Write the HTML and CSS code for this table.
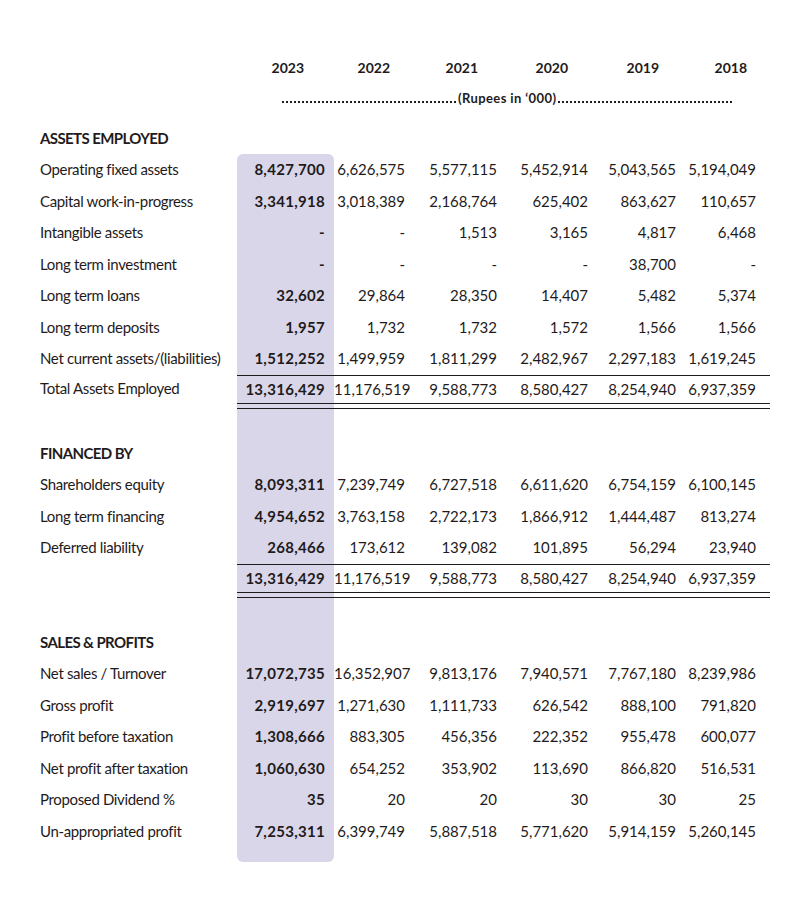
FILE: index.html
```
<!DOCTYPE html>
<html lang="en">
<head>
<meta charset="utf-8">
<title>Six Years at a Glance</title>
<link rel="stylesheet" href="styles.css">
</head>
<body>
<div class="sheet">
  <div class="years">
    <span></span><span>2023</span><span>2022</span><span>2021</span><span>2020</span><span>2019</span><span>2018</span>
  </div>
  <div class="unit"><span class="dots dots-left"></span><span class="unit-text">(Rupees in ‘000)</span><span class="dots"></span></div>

  <div class="table">
    <div class="row"><div class="label title">ASSETS EMPLOYED</div></div>
    <div class="row"><div class="label">Operating fixed assets</div><div class="c hl top">8,427,700</div><div class="c">6,626,575</div><div class="c">5,577,115</div><div class="c">5,452,914</div><div class="c">5,043,565</div><div class="c">5,194,049</div></div>
    <div class="row"><div class="label">Capital work-in-progress</div><div class="c hl">3,341,918</div><div class="c">3,018,389</div><div class="c">2,168,764</div><div class="c">625,402</div><div class="c">863,627</div><div class="c">110,657</div></div>
    <div class="row"><div class="label">Intangible assets</div><div class="c hl">-</div><div class="c">-</div><div class="c">1,513</div><div class="c">3,165</div><div class="c">4,817</div><div class="c">6,468</div></div>
    <div class="row"><div class="label">Long term investment</div><div class="c hl">-</div><div class="c">-</div><div class="c">-</div><div class="c">-</div><div class="c">38,700</div><div class="c">-</div></div>
    <div class="row"><div class="label">Long term loans</div><div class="c hl">32,602</div><div class="c">29,864</div><div class="c">28,350</div><div class="c">14,407</div><div class="c">5,482</div><div class="c">5,374</div></div>
    <div class="row"><div class="label">Long term deposits</div><div class="c hl">1,957</div><div class="c">1,732</div><div class="c">1,732</div><div class="c">1,572</div><div class="c">1,566</div><div class="c">1,566</div></div>
    <div class="row"><div class="label">Net current assets/(liabilities)</div><div class="c hl">1,512,252</div><div class="c">1,499,959</div><div class="c">1,811,299</div><div class="c">2,482,967</div><div class="c">2,297,183</div><div class="c">1,619,245</div></div>
    <div class="row total"><div class="label">Total Assets Employed</div><div class="c hl">13,316,429</div><div class="c">11,176,519</div><div class="c">9,588,773</div><div class="c">8,580,427</div><div class="c">8,254,940</div><div class="c">6,937,359</div></div>
    <div class="row dbl"><div class="label"></div><div class="c hl"></div><div class="c"></div><div class="c"></div><div class="c"></div><div class="c"></div><div class="c"></div></div>
    <div class="row gap"><div class="label"></div><div class="c hl"></div></div>

    <div class="row"><div class="label title">FINANCED BY</div><div class="c hl"></div></div>
    <div class="row"><div class="label">Shareholders equity</div><div class="c hl">8,093,311</div><div class="c">7,239,749</div><div class="c">6,727,518</div><div class="c">6,611,620</div><div class="c">6,754,159</div><div class="c">6,100,145</div></div>
    <div class="row"><div class="label">Long term financing</div><div class="c hl">4,954,652</div><div class="c">3,763,158</div><div class="c">2,722,173</div><div class="c">1,866,912</div><div class="c">1,444,487</div><div class="c">813,274</div></div>
    <div class="row"><div class="label">Deferred liability</div><div class="c hl">268,466</div><div class="c">173,612</div><div class="c">139,082</div><div class="c">101,895</div><div class="c">56,294</div><div class="c">23,940</div></div>
    <div class="row total"><div class="label"></div><div class="c hl">13,316,429</div><div class="c">11,176,519</div><div class="c">9,588,773</div><div class="c">8,580,427</div><div class="c">8,254,940</div><div class="c">6,937,359</div></div>
    <div class="row dbl"><div class="label"></div><div class="c hl"></div><div class="c"></div><div class="c"></div><div class="c"></div><div class="c"></div><div class="c"></div></div>
    <div class="row gap"><div class="label"></div><div class="c hl"></div></div>

    <div class="row"><div class="label title">SALES &amp; PROFITS</div><div class="c hl"></div></div>
    <div class="row"><div class="label">Net sales / Turnover</div><div class="c hl">17,072,735</div><div class="c">16,352,907</div><div class="c">9,813,176</div><div class="c">7,940,571</div><div class="c">7,767,180</div><div class="c">8,239,986</div></div>
    <div class="row"><div class="label">Gross profit</div><div class="c hl">2,919,697</div><div class="c">1,271,630</div><div class="c">1,111,733</div><div class="c">626,542</div><div class="c">888,100</div><div class="c">791,820</div></div>
    <div class="row"><div class="label">Profit before taxation</div><div class="c hl">1,308,666</div><div class="c">883,305</div><div class="c">456,356</div><div class="c">222,352</div><div class="c">955,478</div><div class="c">600,077</div></div>
    <div class="row"><div class="label">Net profit after taxation</div><div class="c hl">1,060,630</div><div class="c">654,252</div><div class="c">353,902</div><div class="c">113,690</div><div class="c">866,820</div><div class="c">516,531</div></div>
    <div class="row"><div class="label">Proposed Dividend %</div><div class="c hl">35</div><div class="c">20</div><div class="c">20</div><div class="c">30</div><div class="c">30</div><div class="c">25</div></div>
    <div class="row"><div class="label">Un-appropriated profit</div><div class="c hl">7,253,311</div><div class="c">6,399,749</div><div class="c">5,887,518</div><div class="c">5,771,620</div><div class="c">5,914,159</div><div class="c">5,260,145</div></div>
    <div class="row end"><div class="label"></div><div class="c hl bottom"></div></div>
  </div>
</div>
</body>
</html>
```

FILE: styles.css
```
* { box-sizing: border-box; }

body {
  margin: 0;
  background: #ffffff;
  color: #1f1b1c;
  font-family: Lato, "Liberation Sans", Arial, sans-serif;
}

.sheet {
  width: 770px;
  padding: 58px 0 0 40px;
}

.years {
  display: grid;
  grid-template-columns: 197px 67px 86px 88px 90px 91px 88px;
  height: 20px;
  line-height: 20px;
  font-size: 14px;
  font-weight: 700;
}

.years span {
  text-align: right;
}

.unit {
  display: flex;
  align-items: center;
  width: 450px;
  height: 20px;
  margin: 10px 0 0 242px;
}

.dots {
  flex: 1;
  height: 2.5px;
  margin-top: 8px;
  background-image: repeating-linear-gradient(90deg, #1f1b1c 0 2.5px, transparent 2.5px 4px);
}

.dots-left {
  flex: 0 0 174px;
}

.unit-text {
  padding: 0 2px;
  font-size: 13px;
  font-weight: 700;
  letter-spacing: 0.4px;
  white-space: nowrap;
}

.table {
  margin-top: 14.5px;
}

.row {
  display: grid;
  grid-template-columns: 197px 97px 71px 92px 91px 88px 94px;
  height: 31.5px;
  line-height: 31.5px;
  font-size: 15px;
  white-space: nowrap;
}

.label {
  text-align: left;
  letter-spacing: -0.35px;
}

.title {
  font-weight: 700;
  letter-spacing: -0.6px;
}

.c {
  text-align: right;
}

.c:last-child {
  padding-right: 14px;
}

.hl {
  padding-right: 9px;
  background: #d9d6e9;
  font-weight: 700;
  letter-spacing: 0.3px;
}

.hl.top {
  border-radius: 6px 6px 0 0;
}

.hl.bottom {
  border-radius: 0 0 6px 6px;
}

.total {
  height: 29px;
  line-height: 27px;
}

.total .c {
  border-top: 1.5px solid #1f1b1c;
  border-bottom: 1.5px solid #1f1b1c;
}

.dbl {
  height: 5px;
}

.dbl .c {
  border-bottom: 1.5px solid #1f1b1c;
}

.gap {
  height: 29px;
}

.end {
  height: 15px;
}
```
